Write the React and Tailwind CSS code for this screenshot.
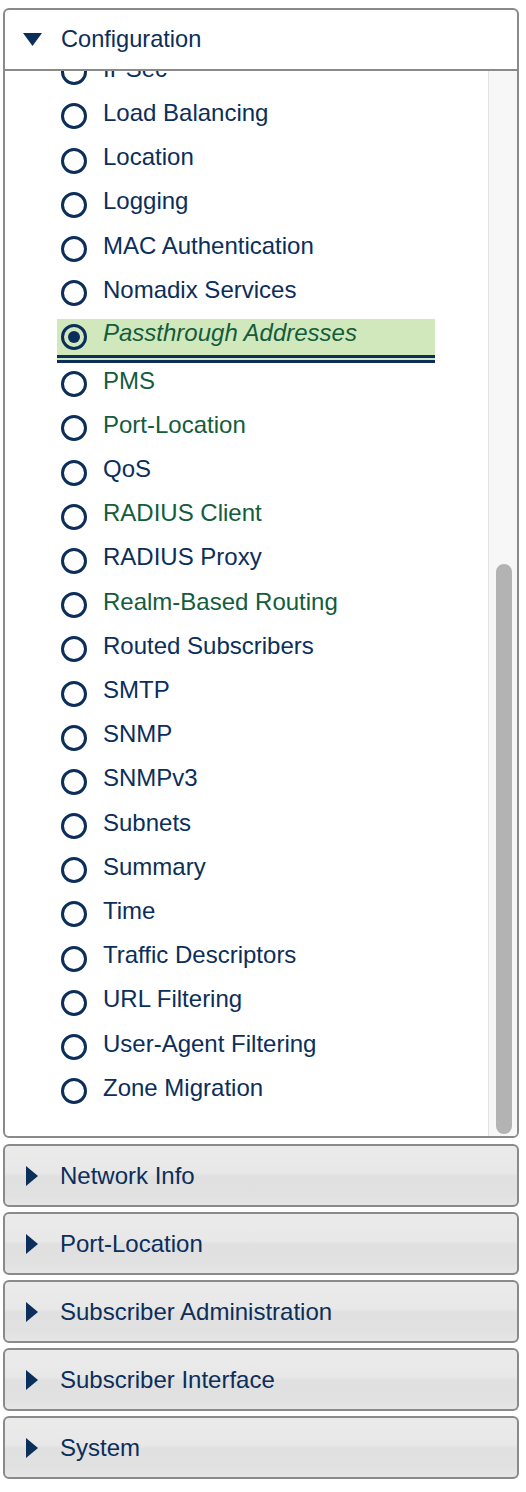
import React from "react";

const NAVY = "text-[#0b2e5a]";
const GREEN = "text-[#135c3c]";

const items = [
  { label: "IPSec" },
  { label: "Load Balancing" },
  { label: "Location" },
  { label: "Logging" },
  { label: "MAC Authentication" },
  { label: "Nomadix Services" },
  { label: "Passthrough Addresses", selected: true },
  { label: "PMS", green: true },
  { label: "Port-Location", green: true },
  { label: "QoS" },
  { label: "RADIUS Client", green: true },
  { label: "RADIUS Proxy" },
  { label: "Realm-Based Routing", green: true },
  { label: "Routed Subscribers" },
  { label: "SMTP" },
  { label: "SNMP" },
  { label: "SNMPv3" },
  { label: "Subnets" },
  { label: "Summary" },
  { label: "Time" },
  { label: "Traffic Descriptors" },
  { label: "URL Filtering" },
  { label: "User-Agent Filtering" },
  { label: "Zone Migration" },
];

function Radio({ checked }) {
  return (
    <span className="mt-[7px] box-border flex h-[26px] w-[26px] shrink-0 items-center justify-center rounded-full border-[3px] border-[#0b2e5a]">
      {checked && <span className="h-[12px] w-[12px] rounded-full bg-[#0b2e5a]" />}
    </span>
  );
}

function Row({ item }) {
  if (item.selected) {
    return (
      <div className="-mb-[3.9px] pt-[7px]">
        <div className="box-border flex h-[43.7px] w-[378px] items-center border-b-[8px] border-double border-[#0b2e5a] bg-[#d1e8bd] pb-[7px] pl-[4px]">
          <Radio checked />
          <span className={`ml-[16px] italic ${GREEN}`}>{item.label}</span>
        </div>
      </div>
    );
  }
  return (
    <div className="flex h-[44.2px] items-center pl-[4px]">
      <Radio />
      <span className={`ml-[16px] ${item.green ? GREEN : NAVY}`}>{item.label}</span>
    </div>
  );
}

function DownTri() {
  return (
    <svg width="19" height="13" viewBox="0 0 19 13" className="shrink-0">
      <polygon points="0,0 19,0 9.5,13" fill="#0b2e5a" />
    </svg>
  );
}

function RightTri() {
  return (
    <svg width="12" height="20" viewBox="0 0 12 20" className="shrink-0">
      <polygon points="0,0 12,10 0,20" fill="#0b2e5a" />
    </svg>
  );
}

function Collapsed({ label }) {
  return (
    <div className="box-border flex h-[63px] items-center rounded-[6px] border-2 border-[#8a8a8a] bg-[linear-gradient(to_bottom,#ebebeb_0%,#e8e8e8_45%,#e0e0e0_52%,#e1e1e1_85%,#e6e6e6_100%)] pl-[21px]">
      <RightTri />
      <span className={`ml-[22px] ${NAVY}`}>{label}</span>
    </div>
  );
}

export default function App() {
  return (
    <div
      className="w-[526px] bg-white pb-[14px] pl-[3px] pr-[7px] pt-[8px] text-[24px] leading-normal"
      style={{ fontFamily: '"Liberation Sans", Arial, Helvetica, sans-serif' }}
    >
      <div className="box-border overflow-hidden rounded-[6px] border-2 border-[#8a8a8a] bg-white">
        <div className="flex h-[61px] items-center border-b-2 border-[#8a8a8a] pl-[18px]">
          <DownTri />
          <span className={`ml-[19px] text-[23.6px] ${NAVY}`}>Configuration</span>
        </div>
        <div className="flex h-[1065px]">
          <div className="flex-1 overflow-hidden pl-[52px]">
            <div className="-mt-[24.3px]">
              {items.map((it) => (
                <Row key={it.label} item={it} />
              ))}
            </div>
          </div>
          <div className="box-border w-[29px] border-l border-[#e2e2e2] bg-[#f7f7f7] pl-[7px]">
            <div className="mt-[493px] h-[570px] w-[16px] rounded-full bg-[#b3b3b3]" />
          </div>
        </div>
      </div>
      <div className="mt-[6px] flex flex-col gap-[5px]">
        <Collapsed label="Network Info" />
        <Collapsed label="Port-Location" />
        <Collapsed label="Subscriber Administration" />
        <Collapsed label="Subscriber Interface" />
        <Collapsed label="System" />
      </div>
    </div>
  );
}
